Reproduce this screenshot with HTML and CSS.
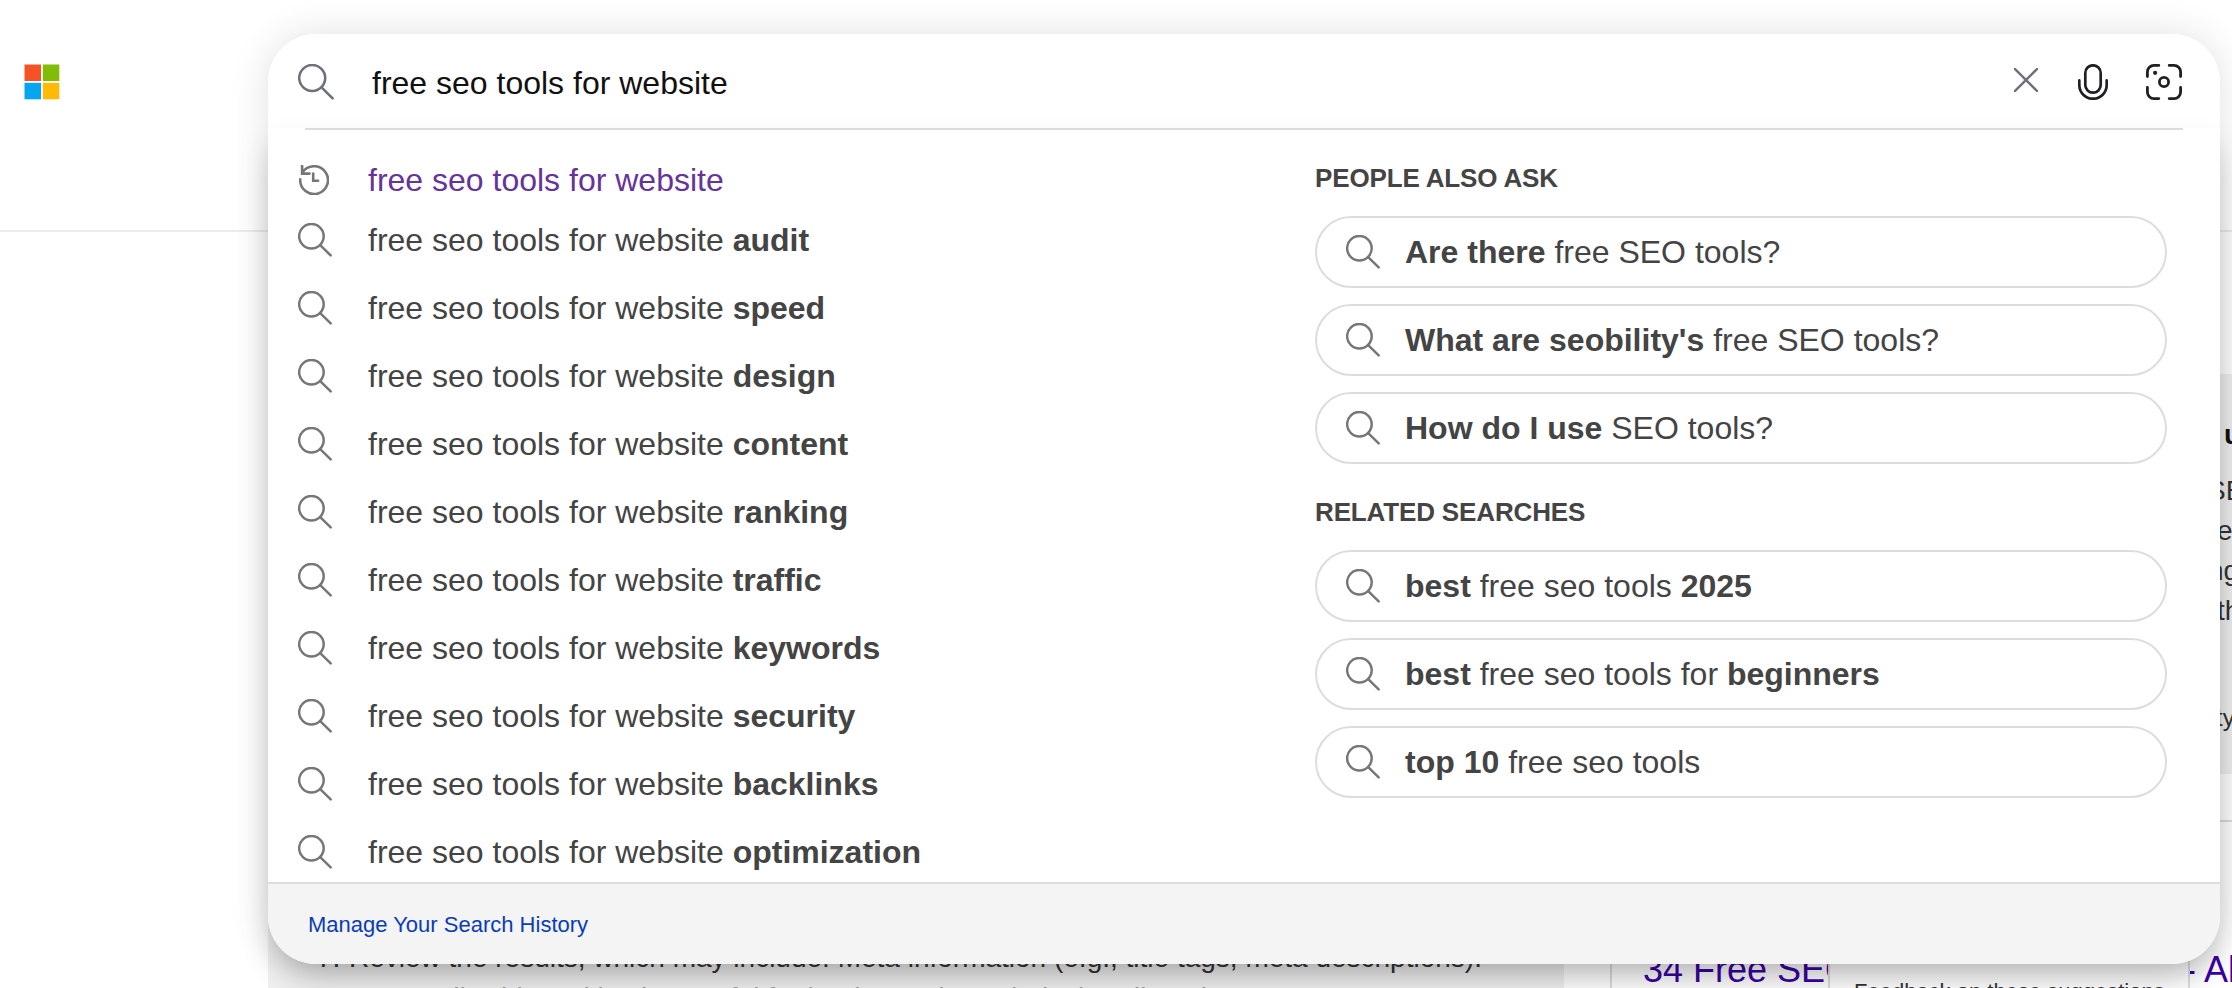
FILE: index.html
```html
<!DOCTYPE html>
<html lang="en">
<head>
  <meta charset="UTF-8" />
  <meta name="viewport" content="width=device-width, initial-scale=1.0"/>
  <title>free seo tools for website - Search</title>
  <link rel="stylesheet" href="styles.css">
</head>
<body>
  <!-- shared icons -->
  <svg class="sprite" width="0" height="0">
    <symbol id="icon-search" viewBox="0 0 36 36">
      <circle cx="14.2" cy="14" r="13" />
      <path d="M23.8 23.6L34.6 34.4" />
    </symbol>
    <symbol id="icon-history" viewBox="0 0 30 30">
      <path d="M1.2 14.4A13.9 13.9 0 1 0 3.4 7.6M3.1 .9v7.7h7.4M14.2 8.5v7.3h4.9" />
    </symbol>
  </svg>

  <header class="page-header">
    <svg class="logo" width="36" height="36" viewBox="0 0 36 36">
      <rect x=".5" y=".5" width="16.5" height="16.5" fill="#f35325" />
      <rect x="18.8" y=".5" width="16.5" height="16.5" fill="#81bc06" />
      <rect x=".5" y="18.8" width="16.5" height="16.5" fill="#05a6f0" />
      <rect x="18.8" y="18.8" width="16.5" height="16.5" fill="#ffba08" />
    </svg>
  </header>

  <main class="results">
    <section class="answer">
      <p class="answer-step"><span class="answer-num">7.</span>Review the results, which may include: Meta information (e.g., title tags, meta descriptions).</p>
      <p class="answer-step answer-faded">Personally, this tool is also useful for beginners in Technical Audit reviews.</p>
    </section>
    <aside class="side">
      <div class="side-card">
        <h3 class="side-title">u</h3>
        <p class="side-line">SE</p>
        <p class="side-line line-e">e</p>
        <p class="side-line line-ng">ng</p>
        <p class="side-line line-th">th</p>
        <p class="side-source">ty</p>
      </div>
      <div class="side-result">
        <div class="side-links">
          <a class="side-link" href="#">34 Free SEO</a>
          <div class="feedback">Feedback on these suggestions</div>
          <a class="side-link link-tail" href="#">- Al</a>
        </div>
      </div>
    </aside>
  </main>

  <div class="search-box">
    <form class="search-form">
      <svg class="form-icon" width="36" height="36"><use href="#icon-search" /></svg>
      <div class="search-input">free seo tools for website</div>
      <svg class="icon-clear" width="24" height="24" viewBox="0 0 24 24"><path d="M.8 .8L23.2 23.2M23.2 .8L.8 23.2" /></svg>
      <svg class="icon-mic" width="30" height="36" viewBox="0 0 30 36">
        <rect x="7.3" y="1.3" width="15.4" height="27.4" rx="7.7" />
        <path d="M1.3 16.4V21a13.7 13.7 0 0 0 27.4 0V16.4" />
      </svg>
      <svg class="icon-lens" width="36" height="36" viewBox="0 0 36 36">
        <path d="M1.4 12.6V8a6.6 6.6 0 0 1 6.6-6.6h4.8M23.2 1.4H28A6.6 6.6 0 0 1 34.6 8v4.6M34.6 23.4V28a6.6 6.6 0 0 1-6.6 6.6h-4.8M12.8 34.6H8A6.6 6.6 0 0 1 1.4 28v-4.6" />
        <circle cx="18" cy="18" r="4.6" />
        <circle class="dot" cx="9.1" cy="8.8" r="2.1" />
      </svg>
    </form>

    <div class="dropdown">
      <div class="suggestions">
        <ul class="suggest-list">
          <li class="suggest visited"><svg width="30" height="30"><use href="#icon-history" /></svg><span>free seo tools for website</span></li>
          <li class="suggest"><svg width="34" height="34"><use href="#icon-search" /></svg><span>free seo tools for website <b>audit</b></span></li>
          <li class="suggest"><svg width="34" height="34"><use href="#icon-search" /></svg><span>free seo tools for website <b>speed</b></span></li>
          <li class="suggest"><svg width="34" height="34"><use href="#icon-search" /></svg><span>free seo tools for website <b>design</b></span></li>
          <li class="suggest"><svg width="34" height="34"><use href="#icon-search" /></svg><span>free seo tools for website <b>content</b></span></li>
          <li class="suggest"><svg width="34" height="34"><use href="#icon-search" /></svg><span>free seo tools for website <b>ranking</b></span></li>
          <li class="suggest"><svg width="34" height="34"><use href="#icon-search" /></svg><span>free seo tools for website <b>traffic</b></span></li>
          <li class="suggest"><svg width="34" height="34"><use href="#icon-search" /></svg><span>free seo tools for website <b>keywords</b></span></li>
          <li class="suggest"><svg width="34" height="34"><use href="#icon-search" /></svg><span>free seo tools for website <b>security</b></span></li>
          <li class="suggest"><svg width="34" height="34"><use href="#icon-search" /></svg><span>free seo tools for website <b>backlinks</b></span></li>
          <li class="suggest"><svg width="34" height="34"><use href="#icon-search" /></svg><span>free seo tools for website <b>optimization</b></span></li>
        </ul>

        <div class="related">
          <h2>PEOPLE ALSO ASK</h2>
          <ul class="pills">
            <li class="pill"><svg width="34" height="34"><use href="#icon-search" /></svg><span><b>Are there</b> free SEO tools?</span></li>
            <li class="pill"><svg width="34" height="34"><use href="#icon-search" /></svg><span><b>What are seobility's</b> free SEO tools?</span></li>
            <li class="pill"><svg width="34" height="34"><use href="#icon-search" /></svg><span><b>How do I use</b> SEO tools?</span></li>
          </ul>
          <h2>RELATED SEARCHES</h2>
          <ul class="pills">
            <li class="pill"><svg width="34" height="34"><use href="#icon-search" /></svg><span><b>best</b> free seo tools <b>2025</b></span></li>
            <li class="pill"><svg width="34" height="34"><use href="#icon-search" /></svg><span><b>best</b> free seo tools for <b>beginners</b></span></li>
            <li class="pill"><svg width="34" height="34"><use href="#icon-search" /></svg><span><b>top 10</b> free seo tools</span></li>
          </ul>
        </div>
      </div>

      <div class="dropdown-footer">
        <a href="#">Manage Your Search History</a>
      </div>
    </div>
  </div>
</body>
</html>
```
FILE: styles.css
```css
* {
  box-sizing: border-box;
}
body {
  margin: 0;
  height: 988px;
  overflow: hidden;
  background: #fff;
  color: #444;
  font-family: "Liberation Sans", Arial, Helvetica, sans-serif;
  font-size: 32px;
}
h2, h3, p, ul {
  margin: 0;
  padding: 0;
}
ul {
  list-style: none;
}
a {
  text-decoration: none;
}
svg {
  flex: none;
  display: block;
  fill: none;
  stroke: #767676;
  stroke-width: 2.6;
  stroke-linecap: round;
}
.sprite {
  position: absolute;
}

/* page behind the search box */
.page-header {
  height: 232px;
  padding: 64px 24px 0;
  border-bottom: 2px solid #ececec;
}
.logo {
  stroke: none;
}
.results {
  display: flex;
  gap: 46px;
  height: 756px;
  padding-left: 268px;
}
.answer {
  flex: none;
  width: 1296px;
  height: 756px;
  overflow: hidden;
  padding: 710px 0 0 81px;
  background: #f0f0f0;
  font-size: 28px;
  line-height: 32px;
  white-space: nowrap;
  color: #333;
}
.answer-num {
  display: inline-block;
  width: 32px;
  margin-left: -32px;
}
.answer-faded {
  margin-top: 8px;
  color: #999;
}
.side {
  flex: none;
  width: 622px;
  overflow: hidden;
  padding-top: 142px;
}
.side-card {
  height: 400px;
  padding: 41px 0 0 596px;
  background: #f0f0f0;
  white-space: nowrap;
  color: #333;
}
.side-title {
  padding-left: 18px;
  font-size: 28px;
  line-height: 40px;
  color: #111;
}
.side-line {
  font-size: 28px;
  line-height: 40px;
}
.side-title + .side-line {
  margin-top: 16px;
  padding-left: 1px;
}
.line-e {
  padding-left: 11px;
}
.line-ng {
  padding-left: 2px;
}
.line-th {
  padding-left: 11px;
}
.side-source {
  margin-top: 69px;
  padding-left: 10px;
  font-size: 24px;
  line-height: 36px;
}
.side-result {
  height: 170px;
  margin-top: 46px;
  border: 2px solid #ddd;
  border-right: none;
}
.side-links {
  display: flex;
  padding: 126px 0 0 31px;
}
.side-link {
  flex: none;
  width: 185px;
  overflow: hidden;
  font-size: 36px;
  line-height: 44px;
  white-space: nowrap;
  color: #3b00a4;
}
.feedback {
  flex: none;
  width: 362px;
  padding: 32px 0 0 24px;
  border: 2px solid #ddd;
  border-top: none;
  background: #fff;
  font-size: 22px;
  line-height: 24px;
  white-space: nowrap;
  color: #333;
}
.link-tail {
  width: 50px;
  text-indent: -6px;
}

/* search box laid over the results */
.search-box {
  position: absolute;
  top: 34px;
  left: 268px;
  width: 1952px;
  height: 930px;
  border-radius: 48px;
  box-shadow: 0 0 40px rgba(0, 0, 0, .12);
}
.search-form {
  display: flex;
  align-items: flex-start;
  height: 94px;
  padding: 30px 38px 0 30px;
  border-radius: 48px 48px 0 0;
  background: #fff;
}
.form-icon {
  stroke: #6c717a;
}
.search-input {
  flex: 1;
  margin-left: 38px;
  line-height: 38px;
  color: #111;
}
.icon-clear {
  margin: 4px 40px 0 0;
  stroke: #6c717a;
  stroke-width: 2.4;
}
.icon-mic {
  margin-right: 38px;
  stroke: #1f1f24;
  stroke-width: 2.7;
}
.icon-lens {
  stroke: #1f1f24;
  stroke-width: 2.8;
}
.icon-lens .dot {
  fill: #1f1f24;
  stroke: none;
}
.dropdown {
  height: 836px;
  overflow: hidden;
  border-radius: 0 0 48px 48px;
  background: #fff;
  box-shadow: 0 16px 32px -6px rgba(0, 0, 0, .26);
}
.suggestions {
  display: flex;
  height: 754px;
  overflow: hidden;
}
.suggestions::before {
  content: "";
  flex: none;
  width: 1878px;
  height: 2px;
  margin: 0 -1878px 0 37px;
  background: #ddd;
}
.suggest-list {
  width: 1010px;
  padding-top: 26px;
}
.suggest {
  display: flex;
  align-items: center;
  height: 68px;
  line-height: 68px;
  margin-left: -7px;
}
.suggest span {
  margin-left: 36px;
}
.suggest.visited {
  height: 52px;
  line-height: 52px;
  margin-left: -6px;
  color: #663399;
}
.visited span {
  margin-left: 39px;
}
.related {
  width: 852px;
  padding-top: 30px;
}
.related h2 {
  margin-bottom: 18px;
  font-size: 26px;
  line-height: 40px;
  letter-spacing: -.15px;
}
.pills {
  display: flex;
  flex-direction: column;
  gap: 16px;
  margin-bottom: 28px;
}
.pill {
  display: flex;
  align-items: center;
  height: 72px;
  padding-left: 29px;
  border: 2px solid #ddd;
  border-radius: 36px;
}
.pill span {
  margin-left: 25px;
}
.dropdown-footer {
  height: 82px;
  padding-left: 40px;
  border-top: 2px solid #ddd;
  background: #f4f4f4;
  font-size: 22px;
  line-height: 82px;
}
.dropdown-footer a {
  color: #0a3cba;
}
```
